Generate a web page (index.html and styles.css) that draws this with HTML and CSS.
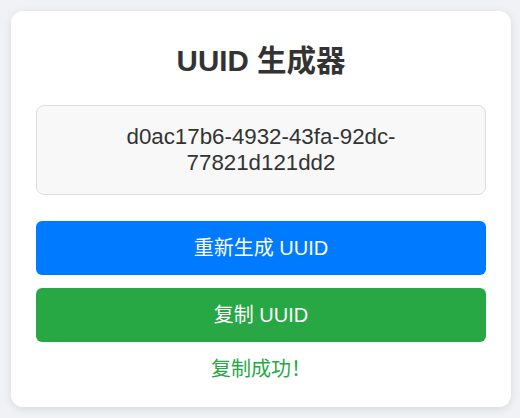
FILE: index.html
```html
<!DOCTYPE html>
<html lang="zh">
<head>
<meta charset="utf-8">
<title>UUID 生成器</title>
<link rel="stylesheet" href="styles.css">
</head>
<body>
<div class="card">
  <h1 class="title">UUID 生成器</h1>
  <div class="output">d0ac17b6-4932-43fa-92dc-77821d121dd2</div>
  <div class="actions">
    <button class="btn btn-primary">重新生成 UUID</button>
    <button class="btn btn-success">复制 UUID</button>
  </div>
  <div class="status">复制成功！</div>
</div>
</body>
</html>
```
FILE: styles.css
```css
html, body {
  margin: 0;
  padding: 0;
}
body {
  background: #f0f2f5;
  font-family: "Liberation Sans", "Noto Sans CJK SC", sans-serif;
  color: #333;
  padding: 11px;
}
.card {
  width: 500px;
  box-sizing: border-box;
  background: #fff;
  border-radius: 12px;
  box-shadow: 0 2px 10px rgba(0, 0, 0, 0.1);
  padding: 25px;
  display: flex;
  flex-direction: column;
}
.title {
  margin: 7px 0 26px;
  font-size: 29.5px;
  line-height: 36px;
  font-weight: bold;
  text-align: center;
  color: #333;
}
.output {
  background: #f8f8f8;
  border: 1px solid #ddd;
  border-radius: 8px;
  padding: 18px 20px;
  font-size: 22.3px;
  line-height: 26px;
  text-align: center;
  color: #333;
}
.actions {
  margin-top: 26px;
  display: flex;
  flex-direction: column;
  gap: 13px;
}
.btn {
  display: block;
  width: 100%;
  border: none;
  border-radius: 6px;
  padding: 15px;
  font-family: "Liberation Sans", "Noto Sans CJK SC", sans-serif;
  font-size: 20px;
  line-height: 24px;
  color: #fff;
  cursor: pointer;
}
.btn-primary {
  background: #007bff;
}
.btn-success {
  background: #28a745;
}
.status {
  margin-top: 14px;
  font-size: 20px;
  line-height: 26px;
  text-align: center;
  color: #28a745;
}
```
